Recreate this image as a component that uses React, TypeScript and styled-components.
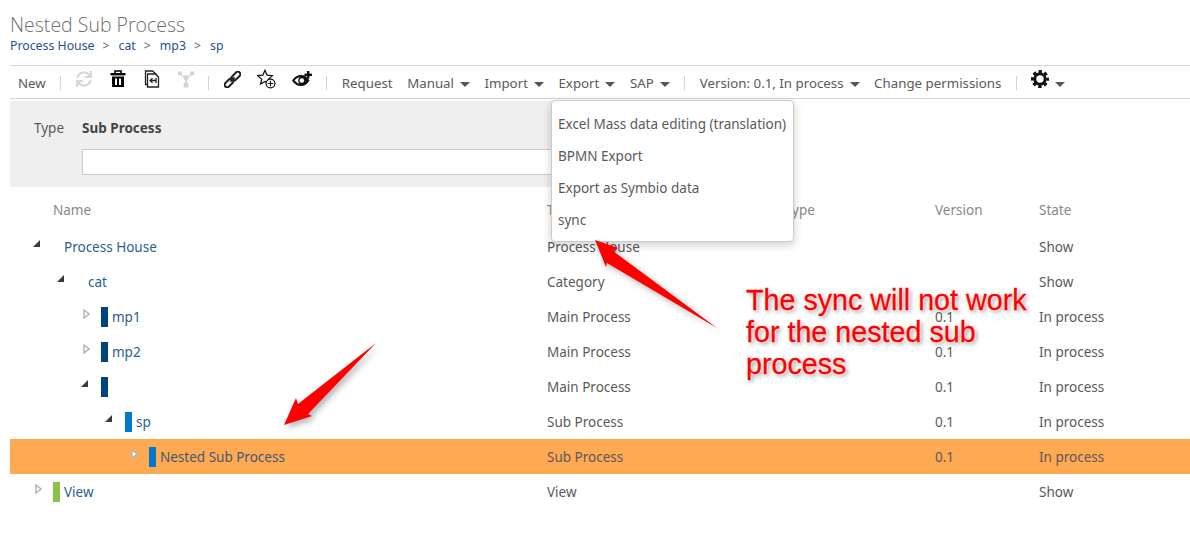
import { createGlobalStyle, styled } from "styled-components";
import { FaSync } from "react-icons/fa";

const GlobalStyle = createGlobalStyle`
  html, body {
    margin: 0;
    background: #fff;
  }
  body {
    font-family: "Noto Sans", "Open Sans", sans-serif;
    font-size: 13.5px;
    color: #5a5a5a;
    overflow: hidden;
  }
`;

type TreeRow = {
  name: string;
  level: number;
  open: boolean;
  bar?: string;
  type: string;
  version?: string;
  state: string;
  selected?: boolean;
};

const rows: TreeRow[] = [
  { name: "Process House", level: 0, open: true, type: "Process House", state: "Show" },
  { name: "cat", level: 1, open: true, type: "Category", state: "Show" },
  { name: "mp1", level: 2, open: false, bar: "#00457e", type: "Main Process", version: "0.1", state: "In process" },
  { name: "mp2", level: 2, open: false, bar: "#00457e", type: "Main Process", version: "0.1", state: "In process" },
  { name: "", level: 2, open: true, bar: "#00457e", type: "Main Process", version: "0.1", state: "In process" },
  { name: "sp", level: 3, open: true, bar: "#0078d0", type: "Sub Process", version: "0.1", state: "In process" },
  { name: "Nested Sub Process", level: 4, open: false, bar: "#0078d0", type: "Sub Process", version: "0.1", state: "In process", selected: true },
  { name: "View", level: 0, open: false, bar: "#8cc24a", type: "View", state: "Show" },
];

const crumbs = ["Process House", "cat", "mp3", "sp"];
const exportItems = ["Excel Mass data editing (translation)", "BPMN Export", "Export as Symbio data", "sync"];

function TrashIcon() {
  return (
    <svg width="16" height="18" viewBox="0 0 16 18">
      <path d="M5 3V1h6v2" fill="none" stroke="#000" strokeWidth="1.6" />
      <rect x="0.5" y="3" width="15" height="2.4" fill="#000" />
      <path d="M2 6.5h12V17H2z M5 8.5v6.6h2V8.5z M9 8.5v6.6h2V8.5z" fill="#000" fillRule="evenodd" />
    </svg>
  );
}

function CopyIcon() {
  return (
    <svg width="16" height="18" viewBox="0 0 16 18" fill="none" stroke="#222" strokeWidth="1.3">
      <path d="M3.5 14.5H1.5V1h7l4 3.5v2" />
      <path d="M3.500 4h8l3 3v10h-11z" fill="#fff" />
      <path d="M12 10.500H6.500M8.500 8.200l-2.400 2.300 2.400 2.300" />
      <path d="M12 8v5" />
    </svg>
  );
}

function ForkIcon() {
  return (
    <svg width="16" height="18" viewBox="0 0 17 18" fill="#d4d4d4">
      <rect x="0" y="1" width="4" height="4" />
      <rect x="13" y="1" width="4" height="4" />
      <circle cx="8.500" cy="7.500" r="2.800" />
      <path d="M3 3.500l4 3-1 1-4-3zM14 3.500l-4 3 1 1 4-3z" />
      <rect x="7.500" y="9" width="2" height="4" />
      <rect x="6" y="13" width="5" height="5" />
    </svg>
  );
}

function LinkIcon() {
  return (
    <svg width="17" height="17" viewBox="0 0 17 17" fill="none" stroke="#222" strokeWidth="2">
      <g transform="rotate(-45 8.500 8.500)">
        <rect x="-1.500" y="6" width="10" height="5" rx="2.500" />
        <rect x="8.500" y="6" width="10" height="5" rx="2.500" />
        <path d="M5.500 8.500h6" />
      </g>
    </svg>
  );
}

function StarPlusIcon() {
  return (
    <svg width="19" height="20" viewBox="0 0 19 20" fill="none" stroke="#111" strokeWidth="1.200">
      <path d="M8 1.200l2.100 4.900 5.300.5-4 3.500 1 5-4.400-2.700-4.500 2.700 1.200-5-4-3.500 5.200-.5z" fill="#fff" />
      <circle cx="13.500" cy="14.500" r="4.400" fill="#fff" />
      <path d="M13.500 11.800v5.400M10.800 14.500h5.400" />
    </svg>
  );
}

function EyePlusIcon() {
  return (
    <svg width="20" height="17" viewBox="0 0 20 17">
      <path d="M0 9.500C2.500 5.600 5.600 4 9 4c3.400 0 6.300 1.600 8.500 5.500-2.200 3.900-5.100 5.500-8.500 5.500-3.400 0-6.500-1.600-9-5.500z" fill="#111" />
      <path d="M2.600 9.500C4.400 7.400 6 6.500 7.500 6.300 5.800 7.800 5.800 11.300 7.500 12.700 6 12.500 4.400 11.600 2.600 9.500z" fill="#fff" />
      <circle cx="9.800" cy="9.500" r="2.300" fill="#fff" />
      <rect x="15" y="0" width="2.400" height="7.600" fill="#111" />
      <rect x="12.400" y="2.600" width="7.600" height="2.400" fill="#111" />
    </svg>
  );
}

function GearIcon() {
  return (
    <svg width="18" height="18" viewBox="0 0 18 18" fill="none" stroke="#111">
      <circle cx="9" cy="9" r="5.200" strokeWidth="3" />
      <circle cx="9" cy="9" r="7.500" strokeWidth="3" strokeDasharray="3.300 2.590" strokeDashoffset="1.650" />
    </svg>
  );
}

function Toggle({ open }: { open: boolean }) {
  return open ? (
    <ToggleMark width="7" height="7" viewBox="0 0 7 7" $open>
      <path d="M7 0v7H0z" fill="#3a3a3a" />
    </ToggleMark>
  ) : (
    <ToggleMark width="7" height="10" viewBox="0 0 7 10">
      <path d="M1 1l5 4-5 4z" fill="#fff" stroke="#b5b5b5" strokeWidth="1.500" />
    </ToggleMark>
  );
}

export default function App() {
  return (
    <Page>
      <GlobalStyle />
      <Title>Nested Sub Process</Title>
      <Breadcrumb>
        {crumbs.map((crumb, i) => (
          <Crumb key={crumb}>
            {i > 0 && <CrumbSep>&gt;</CrumbSep>}
            {crumb}
          </Crumb>
        ))}
      </Breadcrumb>

      <Toolbar>
        <ToolText>New</ToolText>
        <Sep />
        <IconGroup $gap={18}>
          <IconSlot $muted><FaSync size={16} /></IconSlot>
          <IconSlot><TrashIcon /></IconSlot>
          <IconSlot><CopyIcon /></IconSlot>
          <IconSlot><ForkIcon /></IconSlot>
        </IconGroup>
        <Sep />
        <IconGroup $gap={16}>
          <IconSlot><LinkIcon /></IconSlot>
          <IconSlot><StarPlusIcon /></IconSlot>
          <IconSlot><EyePlusIcon /></IconSlot>
        </IconGroup>
        <Sep />
        <ToolText>Request</ToolText>
        <ToolText>Manual <CaretMark /></ToolText>
        <ToolText>Import <CaretMark /></ToolText>
        <ToolText>Export <CaretMark /></ToolText>
        <ToolText>SAP <CaretMark /></ToolText>
        <Sep />
        <ToolText>Version: 0.1, In process <CaretMark /></ToolText>
        <ToolText>Change permissions</ToolText>
        <Sep />
        <ToolText><IconSlot><GearIcon /></IconSlot> <CaretMark /></ToolText>
      </Toolbar>

      <FilterPanel>
        <FilterLabel>Type</FilterLabel>
        <FilterValue>Sub Process</FilterValue>
        <FilterInput />
      </FilterPanel>

      <HeadRow>
        <HeadName>Name</HeadName>
        <span>Type</span>
        <span>Process type</span>
        <span>Version</span>
        <span>State</span>
      </HeadRow>

      {rows.map((row, i) => (
        <Row key={i} $selected={row.selected}>
          <NameCell $level={row.level}>
            <ToggleSlot><Toggle open={row.open} /></ToggleSlot>
            <Bar $color={row.bar} />
            <NameLink $selected={row.selected}>{row.name}</NameLink>
          </NameCell>
          <span>{row.type}</span>
          <span />
          <span>{row.version}</span>
          <span>{row.state}</span>
        </Row>
      ))}

      <ExportMenu>
        {exportItems.map((item) => (
          <MenuItem key={item}>{item}</MenuItem>
        ))}
      </ExportMenu>

      <ArrowLayer width="1190" height="549" viewBox="0 0 1190 549">
        <polygon points="284,425 296,398 298,404 376,343 308,414 312,416" fill="#f00" />
        <polygon points="595,240 618,248 613,251 717,328 607,263 606,267" fill="#f00" />
      </ArrowLayer>
      <Callout>The sync will not work for the nested sub process</Callout>
    </Page>
  );
}

const Page = styled.div`
  position: relative;
  height: 549px;
  padding-left: 10px;
  box-sizing: border-box;
  overflow: hidden;
`;

const Title = styled.div`
  padding-top: 11px;
  font-family: "Open Sans", "Noto Sans", sans-serif;
  font-size: 19.500px;
  font-weight: 300;
  line-height: 27px;
  color: #6f6f6f;
`;

const Breadcrumb = styled.div`
  display: flex;
  height: 16px;
  line-height: 16px;
  font-size: 12.300px;
  color: #27508f;
`;

const Crumb = styled.span`
  display: inline-flex;
`;

const CrumbSep = styled.span`
  margin: 0 9px 0 8px;
  color: #666;
`;

const Toolbar = styled.div`
  display: flex;
  align-items: center;
  gap: 14.500px;
  height: 30px;
  margin-top: 11px;
  padding: 2px 0 0 8px;
  border-top: 1px solid #d6d6d6;
  border-bottom: 1px solid #d6d6d6;
  font-size: 13.300px;
`;

const ToolText = styled.span`
  display: inline-flex;
  align-items: center;
  gap: 6px;
  white-space: nowrap;
`;

const CaretMark = styled.i`
  display: inline-block;
  margin-top: 2px;
  border-left: 5px solid transparent;
  border-right: 5px solid transparent;
  border-top: 5px solid #555;
`;

const Sep = styled.i`
  width: 1px;
  height: 14px;
  background: #cdd6e0;
`;

const IconGroup = styled.div<{ $gap: number }>`
  display: flex;
  align-items: center;
  gap: ${(p) => p.$gap}px;
`;

const IconSlot = styled.span<{ $muted?: boolean }>`
  display: inline-flex;
  margin-top: -8px;
  color: ${(p) => (p.$muted ? "#d8d8d8" : "#111")};
`;

const FilterPanel = styled.div`
  display: grid;
  grid-template-columns: 48px 1fr;
  row-gap: 12px;
  width: 770px;
  height: 86px;
  margin-top: 2px;
  padding: 18px 0 0 24px;
  box-sizing: border-box;
  background: #efefef;
  align-content: start;
`;

const FilterLabel = styled.span`
  line-height: 18px;
`;

const FilterValue = styled.span`
  font-weight: 700;
  line-height: 18px;
  color: #444;
`;

const FilterInput = styled.input`
  grid-column: 2;
  width: 640px;
  height: 26px;
  padding: 0;
  box-sizing: border-box;
  background: #fff;
  border: 1px solid #ccc;
`;

const tableColumns = "537px 188px 200px 104px 1fr";

const HeadRow = styled.div`
  display: grid;
  grid-template-columns: ${tableColumns};
  height: 42px;
  padding-top: 14px;
  box-sizing: border-box;
  line-height: 18px;
  color: #888;
`;

const HeadName = styled.span`
  padding-left: 43px;
`;

const Row = styled.div<{ $selected?: boolean }>`
  display: grid;
  grid-template-columns: ${tableColumns};
  align-items: center;
  height: 35px;
  background: ${(p) => (p.$selected ? "#ffa953" : "transparent")};
`;

const NameCell = styled.div<{ $level: number }>`
  display: flex;
  align-items: center;
  padding-left: ${(p) => 23 + p.$level * 24}px;
`;

const ToggleSlot = styled.span`
  display: inline-flex;
  width: 20px;
  margin-top: -6px;
`;

const ToggleMark = styled.svg<{ $open?: boolean }>`
  margin-left: ${(p) => (p.$open ? "0" : "2px")};
`;

const Bar = styled.i<{ $color?: string }>`
  width: 7px;
  height: 20px;
  margin-right: 4px;
  background: ${(p) => p.$color ?? "transparent"};
`;

const NameLink = styled.span<{ $selected?: boolean }>`
  color: ${(p) => (p.$selected ? "#3f5a75" : "#2a5f8f")};
`;

const ExportMenu = styled.div`
  position: absolute;
  left: 551px;
  top: 100px;
  width: 243px;
  height: 142px;
  padding-top: 7px;
  box-sizing: border-box;
  background: #fff;
  border: 1px solid #ccc;
  border-radius: 4px;
  box-shadow: 0 3px 10px rgba(0, 0, 0, 0.2);
`;

const MenuItem = styled.div`
  height: 32px;
  padding-left: 6px;
  line-height: 32px;
  white-space: nowrap;
`;

const ArrowLayer = styled.svg`
  position: absolute;
  left: 0;
  top: 0;
  filter: drop-shadow(3px 3px 3px rgba(0, 0, 0, 0.3));
`;

const Callout = styled.div`
  position: absolute;
  left: 746px;
  top: 284px;
  width: 300px;
  font-family: "Liberation Sans", Arial, sans-serif;
  font-size: 28.700px;
  line-height: 32px;
  color: #f00;
  -webkit-text-stroke: 0.3px #f00;
  text-shadow: 0 0 2px #fff, 0 0 2px #fff, 2px 2px 4px rgba(0, 0, 0, 0.45);
`;
